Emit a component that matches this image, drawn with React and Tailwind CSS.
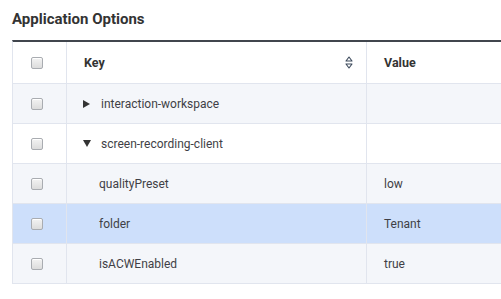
import React from "react";

function Checkbox() {
  return (
    <div className="w-[12px] h-[12px] rounded-[2px] border border-[#a9acb1] bg-gradient-to-b from-[#f3f3f3] to-[#dcdcdc] shadow-[inset_0_1px_0_#fff]" />
  );
}

function SortIcon() {
  return (
    <svg width="8" height="13" viewBox="0 0 8 13" className="text-[#3d4a5c]">
      <path d="M4 1 L7 5 L1 5 Z" fill="none" stroke="currentColor" strokeWidth="1.1" strokeLinejoin="round" />
      <path d="M1 8 L7 8 L4 12 Z" fill="none" stroke="currentColor" strokeWidth="1.1" strokeLinejoin="round" />
    </svg>
  );
}

const rows = [
  { key: "interaction-workspace", value: "", type: "collapsed", bg: "bg-[#f4f6fa]" },
  { key: "screen-recording-client", value: "", type: "expanded", bg: "bg-white" },
  { key: "qualityPreset", value: "low", type: "child", bg: "bg-[#f4f6fa]" },
  { key: "folder", value: "Tenant", type: "child", bg: "bg-[#cddffb]" },
  { key: "isACWEnabled", value: "true", type: "child", bg: "bg-[#f4f6fa]" },
];

export default function App() {
  return (
    <div className="w-[501px] h-[299px] bg-white overflow-hidden text-[#3f3f46] font-['Roboto',sans-serif]">
      <div className="pl-[12px] pt-[9px] h-[40px] text-[15px] font-bold text-[#333] leading-[20px]">
        Application Options
      </div>
      <div className="ml-[12px] w-[520px] border-t-2 border-[#41464d] border-l border-l-[#e1e5ee]">
        <div className="flex h-[42px] border-b border-[#e1e5ee] bg-white">
          <div className="w-[54px] border-r border-[#e1e5ee] flex items-center pl-[18px]">
            <Checkbox />
          </div>
          <div className="w-[300px] border-r border-[#e1e5ee] flex items-center pl-[17px] pr-[13px]">
            <span className="text-[12.5px] font-bold text-[#333] flex-1 pt-[1px]">Key</span>
            <SortIcon />
          </div>
          <div className="flex-1 flex items-center pl-[17px]">
            <span className="text-[12.5px] font-bold text-[#333] pt-[1px]">Value</span>
          </div>
        </div>
        {rows.map((r) => (
          <div key={r.key} className={`flex h-[40px] border-b border-[#e1e5ee] ${r.bg}`}>
            <div className="w-[54px] border-r border-[#e1e5ee] flex items-center pl-[18px]">
              <Checkbox />
            </div>
            <div className="w-[300px] border-r border-[#e1e5ee] flex items-center pl-[16px] text-[12px]">
              {r.type === "collapsed" && (
                <svg width="7" height="8" viewBox="0 0 7 8" className="mr-[11px]">
                  <path d="M0 0 L7 4 L0 8 Z" fill="#333" />
                </svg>
              )}
              {r.type === "expanded" && (
                <svg width="8" height="7" viewBox="0 0 8 7" className="mr-[10px]">
                  <path d="M0 0 L8 0 L4 7 Z" fill="#333" />
                </svg>
              )}
              {r.type === "child" && <span className="w-[16px]" />}
              <span className="pt-[1px]">{r.key}</span>
            </div>
            <div className="flex-1 flex items-center pl-[17px] text-[12px]">
              <span className="pt-[1px]">{r.value}</span>
            </div>
          </div>
        ))}
      </div>
    </div>
  );
}
